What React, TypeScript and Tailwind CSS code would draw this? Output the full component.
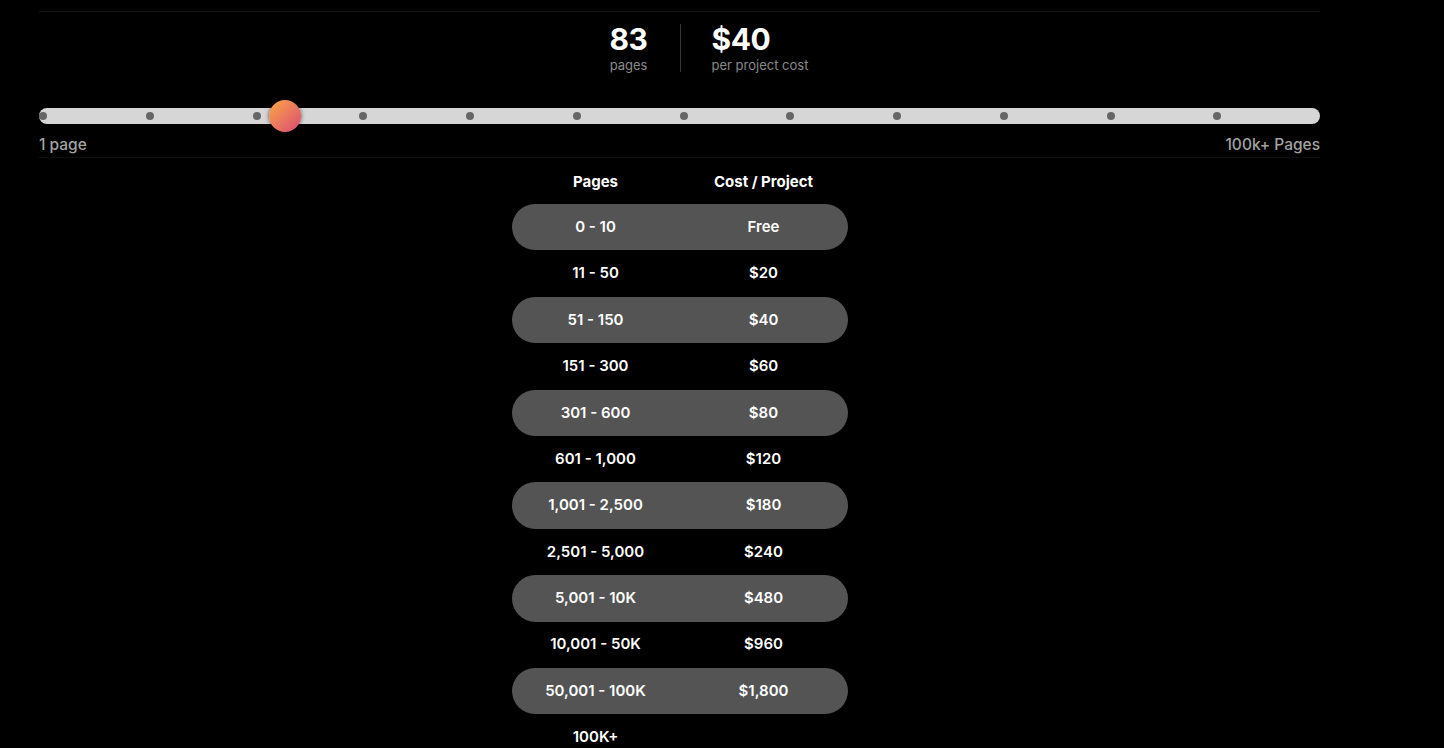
import React from 'react';

const tiers = [
    { pages: '0 - 10', cost: 'Free' },
    { pages: '11 - 50', cost: '$20' },
    { pages: '51 - 150', cost: '$40' },
    { pages: '151 - 300', cost: '$60' },
    { pages: '301 - 600', cost: '$80' },
    { pages: '601 - 1,000', cost: '$120' },
    { pages: '1,001 - 2,500', cost: '$180' },
    { pages: '2,501 - 5,000', cost: '$240' },
    { pages: '5,001 - 10K', cost: '$480' },
    { pages: '10,001 - 50K', cost: '$960' },
    { pages: '50,001 - 100K', cost: '$1,800' },
    { pages: '100K+', cost: '' },
];

// 12 stops on the slider
const stops = Array.from({ length: 12 }, (_, i) => i);

export default function App() {
    return (
        <div className="min-h-[748px] bg-black text-white font-['Inter','Liberation_Sans',sans-serif] overflow-hidden">
            <div className="ml-[39px] w-[1281px] pt-[11px]">
                <div className="h-px bg-[#151515]" />

                {/* summary */}
                <div className="flex mt-[12px]">
                    <div className="flex-1 flex justify-end pr-[32px]">
                        <div className="flex flex-col items-center">
                            <span className="text-[30px] font-bold leading-[30px] tracking-[-0.5px]">83</span>
                            <span className="text-[13px] leading-[16px] mt-[3px] text-[#8a8a8a]">pages</span>
                        </div>
                    </div>
                    <div className="w-px h-[48px] bg-[#3a3a3a]" />
                    <div className="flex-1 flex flex-col items-start pl-[31px]">
                        <span className="text-[30px] font-bold leading-[30px] tracking-[-0.5px]">$40</span>
                        <span className="text-[13px] leading-[16px] mt-[3px] text-[#8a8a8a]">per project cost</span>
                    </div>
                </div>

                {/* slider */}
                <div className="relative mt-[35px] h-[16px] rounded-full bg-[#d6d6d6]">
                    <div className="flex h-full items-center">
                        {stops.map((i) => (
                            <div key={i} className="w-[106.75px] shrink-0">
                                <div className="w-[8px] h-[8px] rounded-full bg-[#666]" />
                            </div>
                        ))}
                    </div>
                    <div className="absolute left-[230px] top-[-8px] w-[32px] h-[32px] rounded-full bg-gradient-to-br from-[#fba63a] to-[#d9466f] shadow-[0_0_4px_rgba(0,0,0,0.6)]" />
                </div>
                <div className="flex justify-between mt-[11px] text-[15.5px] font-medium leading-[20px] text-[#a3a3a3]">
                    <span>1 page</span>
                    <span>100k+ Pages</span>
                </div>
                <div className="h-px bg-[#0f0f0f] mt-[2px]" />

                {/* tier table */}
                <div className="mx-auto w-[336px] mt-[13px]">
                    <div className="grid grid-cols-2 text-center text-[15px] font-bold leading-[22px] mb-[11px]">
                        <span>Pages</span>
                        <span>Cost / Project</span>
                    </div>
                    {tiers.map((t, i) => (
                        <div
                            key={t.pages}
                            className={`grid grid-cols-2 items-center text-center h-[46.4px] text-[15px] font-semibold ${i % 2 === 0 ? 'rounded-full bg-[#545454]' : ''}`}
                        >
                            <span>{t.pages}</span>
                            <span>{t.cost}</span>
                        </div>
                    ))}
                </div>
            </div>
        </div>
    );
}
